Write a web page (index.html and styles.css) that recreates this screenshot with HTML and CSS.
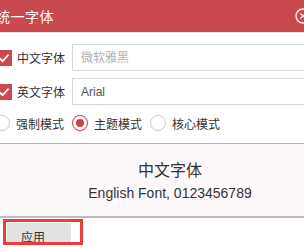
FILE: index.html
```html
<!DOCTYPE html>
<html lang="zh">
<head>
    <meta charset="UTF-8">
    <title>统一字体</title>
    <link rel="stylesheet" href="styles.css">
</head>
<body>
    <div id="app">
        <div class="titlebar">
            <span class="title">统一字体</span>
            <svg class="close" width="16" height="16" viewBox="0 0 16 16">
                <circle cx="8" cy="8" r="7" fill="none" stroke="#fff" stroke-width="1.3"/>
                <path d="M5.3 5.3 L10.7 10.7 M10.7 5.3 L5.3 10.7" stroke="#fff" stroke-width="1.2"/>
            </svg>
        </div>

        <div class="form">
            <div class="row">
                <span class="chk">
                    <svg width="16" height="16" viewBox="0 0 16 16"><path d="M3.5 8.2 L6.6 11.2 L12.6 4.6" fill="none" stroke="#fff" stroke-width="1.8"/></svg>
                </span>
                <label>中文字体</label>
                <input type="text" class="field" placeholder="微软雅黑">
            </div>
            <div class="row">
                <span class="chk">
                    <svg width="16" height="16" viewBox="0 0 16 16"><path d="M3.5 8.2 L6.6 11.2 L12.6 4.6" fill="none" stroke="#fff" stroke-width="1.8"/></svg>
                </span>
                <label>英文字体</label>
                <input type="text" class="field" value="Arial">
            </div>
            <div class="radios">
                <div class="radio"><span class="dot"></span><span>强制模式</span></div>
                <div class="radio on"><span class="dot"></span><span>主题模式</span></div>
                <div class="radio"><span class="dot"></span><span>核心模式</span></div>
            </div>
        </div>

        <div class="preview">
            <div class="cn">中文字体</div>
            <div class="en">English Font, 0123456789</div>
        </div>

        <div class="mark">
            <div class="btn">应用</div>
        </div>
    </div>
</body>
</html>
```

FILE: styles.css
```css
html, body {
    margin: 0;
    padding: 0;
    background: #fff;
    overflow: hidden;
}

#app {
    width: 348px;
    margin-left: -4px;
    font-family: "Noto Sans CJK SC", "Liberation Sans", sans-serif;
    font-size: 12px;
    color: #333;
}

.titlebar {
    height: 32px;
    background: #c9494c;
    border-bottom: 1px solid #e2e2e2;
    display: flex;
    align-items: center;
    color: #fff;
}

.title {
    font-size: 14px;
    letter-spacing: 0.5px;
}

.close {
    margin-left: auto;
    margin-right: 33px;
}

.form {
    padding-top: 11px;
}

.row {
    display: grid;
    grid-template-columns: 16px 50px 1fr;
    column-gap: 5px;
    align-items: center;
    margin-bottom: 7px;
}

.chk {
    width: 16px;
    height: 16px;
    background: #c9494c;
    display: block;
}

.chk svg {
    display: block;
}

.row label {
    line-height: 16px;
}

.field {
    height: 27px;
    box-sizing: border-box;
    border: 1px solid #d6d6d6;
    padding: 0 8px;
    font-family: "Liberation Sans", "Noto Sans CJK SC", sans-serif;
    font-size: 12px;
    color: #555;
    outline: none;
}

.field::placeholder {
    color: #b0b0b0;
    font-family: "Noto Sans CJK SC", sans-serif;
}

.radios {
    display: flex;
    gap: 8px;
    margin-left: -2px;
    margin-top: 8px;
    height: 20px;
    align-items: center;
    margin-bottom: 10px;
}

.radio {
    display: flex;
    align-items: center;
    gap: 6px;
    width: 70px;
}

.dot {
    width: 16px;
    height: 16px;
    box-sizing: border-box;
    border-radius: 50%;
    border: 1px solid #c9c9c9;
    background: #fff;
    display: flex;
    align-items: center;
    justify-content: center;
}

.radio.on .dot {
    border: 1.5px solid #c9494c;
    box-shadow: 0 0 1px #e9a7a8;
}

.radio.on .dot::after {
    content: "";
    width: 8px;
    height: 8px;
    border-radius: 50%;
    background: #d23c40;
}

.preview {
    border-top: 1px solid #c9a6a8;
    border-bottom: 2px solid #c5b9bb;
    background: #fdf9fa;
    height: 72px;
    box-sizing: content-box;
    text-align: center;
    padding-top: 14px;
    box-sizing: border-box;
    height: 75px;
}

.preview .cn {
    font-size: 16px;
    line-height: 22px;
    color: #333;
}

.preview .en {
    font-family: "Liberation Sans", sans-serif;
    font-size: 14px;
    line-height: 18px;
    margin-top: 4px;
    color: #333;
}

.mark {
    display: inline-block;
    margin-top: 1px;
    margin-left: 7px;
    border: 3px solid #ec3a3d;
    padding: 1px 9px 0 1px;
}

.btn {
    width: 64px;
    height: 19px;
    overflow: hidden;
    background: #e2e2e2;
    box-sizing: border-box;
    padding-top: 7px;
    padding-left: 14px;
    font-size: 12px;
    line-height: 14px;
    color: #333;
}
```
